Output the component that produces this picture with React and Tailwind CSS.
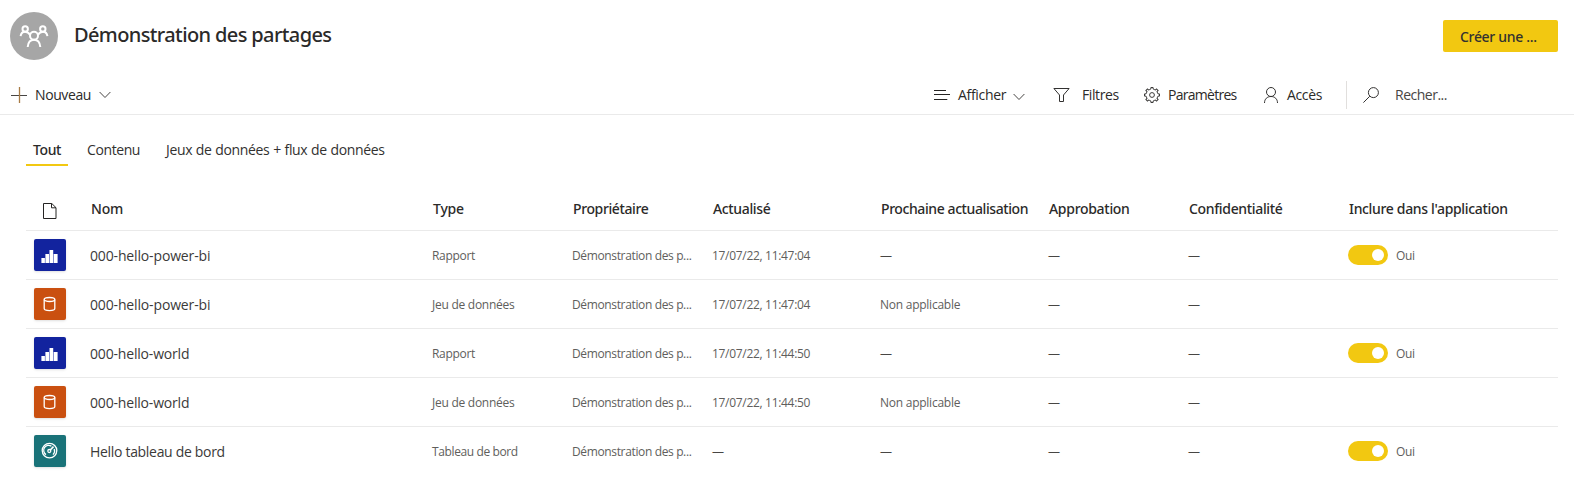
const regular = "font-['Open_Sans','Liberation_Sans',sans-serif] font-normal";
const semibold = "font-['Noto_Sans','Liberation_Sans',sans-serif] font-medium";

const grid =
  'grid grid-cols-[64px_342px_140px_140px_168px_168px_140px_160px_1fr] items-center';

function Plus() {
  return (
    <svg width="16" height="16" viewBox="0 0 16 16" fill="none">
      <path d="M0 8.5h16" stroke="#484644" />
      <path d="M8.500 0v16" stroke="#a87b45" strokeWidth="1.300" />
    </svg>
  );
}

function Chevron({ className = '' }) {
  return (
    <svg className={className} width="12" height="8" viewBox="0 0 12 8" fill="none" stroke="#484644">
      <path d="M.6 1 6 6.5 11.4 1" />
    </svg>
  );
}

function Lines() {
  return (
    <svg width="16" height="16" viewBox="0 0 16 16" fill="none" stroke="#252423">
      <path d="M0 3.5h12M0 7.5h16M0 12.5h13.3" />
    </svg>
  );
}

function Funnel() {
  return (
    <svg width="17" height="16" viewBox="0 0 17 16" fill="none" stroke="#323130">
      <path d="M.9 1.5h15.2L10.5 8v6.5h-4V8z" />
    </svg>
  );
}

function Gear() {
  const teeth = [0, 45, 90, 135, 180, 225, 270, 315];
  return (
    <svg width="16" height="16" viewBox="0 0 16 16" fill="none" stroke="#3b3a39" strokeWidth="1">
      <circle cx="8" cy="8" r="2.4" />
      {teeth.map((angle) => (
        <path
          key={angle}
          transform={`rotate(${angle} 8 8)`}
          d="M5.700 2.450 6.900 2V.5h2.200V2l1.200.450"
        />
      ))}
    </svg>
  );
}

function Person() {
  return (
    <svg width="14" height="16" viewBox="0 0 14 16" fill="none" stroke="#323130">
      <circle cx="7" cy="5" r="4.5" />
      <path d="M.5 16c0-4 2.7-6.5 6.5-6.5s6.5 2.5 6.5 6.5" />
    </svg>
  );
}

function Search() {
  return (
    <svg width="16" height="16" viewBox="0 0 16 16" fill="none" stroke="#323130">
      <circle cx="10.4" cy="5.6" r="5" />
      <path d="M6.8 9.2.4 15.6" />
    </svg>
  );
}

function Page() {
  return (
    <svg width="14" height="16" viewBox="0 0 14 16" fill="none" stroke="#252423">
      <path d="M.5.5h8.3l4.2 4.2v10.8H.5z" />
      <path d="M8.5.5v4.3H13" />
    </svg>
  );
}

function People() {
  return (
    <svg width="30" height="24" viewBox="0 0 30 24" fill="none" stroke="#fff" strokeWidth="2">
      <circle cx="15" cy="11.800" r="4" />
      <path d="M8.700 23c.4-4.500 2.700-7.200 6.300-7.200s5.900 2.700 6.300 7.200" />
      <circle cx="6.200" cy="5" r="2.700" />
      <circle cx="23.800" cy="5" r="2.700" />
      <path d="M1.600 12.200C2 9.200 3.700 7.700 6 7.700c2.300 0 3.900 1.100 5 3.100M28.400 12.200c-.4-3-2.100-4.500-4.400-4.500-2.300 0-3.900 1.100-5 3.100" />
    </svg>
  );
}

const tiles = {
  report: {
    bg: 'bg-[#12239e]',
    icon: (
      <svg width="32" height="32" viewBox="0 0 32 32" fill="#fff">
        <path d="M7.400 19h3.500v5H7.400zM11.400 15h3.600v9h-3.600zM15.500 11h3.700v13h-3.700zM19.700 15h3.900v9h-3.900z" />
      </svg>
    ),
  },
  dataset: {
    bg: 'bg-[#ca5010]',
    icon: (
      <svg width="32" height="32" viewBox="0 0 32 32" fill="none" stroke="#fff" strokeWidth="1.300">
        <ellipse cx="15.500" cy="11.500" rx="5.300" ry="2" />
        <path d="M10.200 11.500v9c0 1.200 2.300 2.100 5.300 2.100s5.300-.9 5.300-2.100v-9" />
      </svg>
    ),
  },
  dashboard: {
    bg: 'bg-[#197278]',
    icon: (
      <svg width="32" height="32" viewBox="0 0 32 32" fill="none" stroke="#fff" strokeWidth="1.300">
        <circle cx="15.500" cy="15.600" r="7.300" />
        <path d="M12 19.600a5 5 0 0 1 5.400-8.500M20.200 14.100a5 5 0 0 1-1.200 5.500" />
        <circle cx="15.300" cy="16" r="1.500" />
        <path d="M16.300 15l3.200-3.400" strokeWidth="1.700" />
      </svg>
    ),
  },
};

const types = {
  report: ['Rapport', 'tracking-[-0.3px]'],
  dataset: ['Jeu de données', 'tracking-[-0.26px]'],
  dashboard: ['Tableau de bord', 'tracking-[-0.38px]'],
};

const rows = [
  { kind: 'report', name: '000-hello-power-bi', spacing: 'tracking-[-0.15px]', updated: '17/07/22, 11:47:04', next: null, included: true },
  { kind: 'dataset', name: '000-hello-power-bi', spacing: 'tracking-[-0.15px]', updated: '17/07/22, 11:47:04', next: 'Non applicable', included: false },
  { kind: 'report', name: '000-hello-world', spacing: 'tracking-[-0.18px]', updated: '17/07/22, 11:44:50', next: null, included: true },
  { kind: 'dataset', name: '000-hello-world', spacing: 'tracking-[-0.18px]', updated: '17/07/22, 11:44:50', next: 'Non applicable', included: false },
  { kind: 'dashboard', name: 'Hello tableau de bord', spacing: 'tracking-[-0.31px]', updated: null, next: null, included: true },
];

const headers = [
  ['Nom', 'tracking-[-0.2px]'],
  ['Type', 'tracking-[-0.2px]'],
  ['Propriétaire', 'tracking-[-0.38px]'],
  ['Actualisé', 'tracking-[-0.36px]'],
  ['Prochaine actualisation', 'tracking-[-0.41px]'],
  ['Approbation', 'tracking-[-0.3px]'],
  ['Confidentialité', 'tracking-[-0.34px]'],
  ["Inclure dans l'application", 'tracking-[-0.33px]'],
];

function Dash() {
  return <span className="text-[#484644]">—</span>;
}

function Row({ row, last }) {
  const [type, typeSpacing] = types[row.kind];
  const tile = tiles[row.kind];
  return (
    <div className={`${grid} h-[49px] border-b text-[12px] leading-4 text-[#605e5c] whitespace-nowrap ${last ? 'border-transparent' : 'border-[#eaeaea]'}`}>
      <div className={`ml-2 size-8 rounded-[2px] shadow-sm ${tile.bg}`}>{tile.icon}</div>
      <div className={`pt-px text-[14px] leading-5 text-[#3b3a39] ${row.spacing}`}>{row.name}</div>
      <div className={`pt-0.5 ${typeSpacing}`}>{type}</div>
      <div className="pt-0.5 tracking-[-0.36px]">Démonstration des p...</div>
      <div className="pt-0.5 tracking-[-0.31px]">{row.updated || <Dash />}</div>
      <div className="pt-0.5 tracking-[-0.25px]">{row.next || <Dash />}</div>
      <div className="pt-0.5"><Dash /></div>
      <div className="pt-0.5"><Dash /></div>
      {row.included ? (
        <div className="flex items-center gap-2">
          <div className="flex h-5 w-10 items-center justify-end rounded-full bg-[#f2c811] pr-1">
            <div className="size-3 rounded-full bg-white" />
          </div>
          <span className="pt-0.5 tracking-[-0.3px]">Oui</span>
        </div>
      ) : (
        <div />
      )}
    </div>
  );
}

export default function App() {
  return (
    <div className={`h-[486px] w-full overflow-hidden bg-white text-[#2b2a29] ${regular}`}>
      <header className="flex h-[76px] items-start justify-between pl-[10px] pr-4 pt-3">
        <div className="flex items-center">
          <div className="flex size-12 items-center justify-center rounded-full bg-[#a6a6a6] pb-px">
            <People />
          </div>
          <h1 className={`-mt-[3px] ml-4 text-[20px] leading-7 tracking-[-0.62px] whitespace-nowrap ${semibold}`}>
            Démonstration des partages
          </h1>
        </div>
        <button className={`mt-2 h-8 w-[115px] rounded-[2px] bg-[#f2c811] pl-[17px] pt-px text-left text-[14px] leading-5 tracking-[-0.32px] text-[#323130] ${semibold}`}>
          Créer une ...
        </button>
      </header>

      <nav className="flex h-[39px] items-center border-b border-[#eaeaea] pl-[11px] text-[14px] leading-5 whitespace-nowrap">
        <Plus />
        <span className="ml-2 w-14 tracking-[-0.4px]">Nouveau</span>
        <Chevron className="ml-2" />
        <div className="flex-1" />
        <div className="flex w-[640px] items-center">
          <Lines />
          <span className="ml-2 w-[49px] tracking-[-0.3px]">Afficher</span>
          <Chevron className="ml-[6px] mt-[3px]" />
          <div className="ml-[28px]"><Funnel /></div>
          <span className="ml-3 w-[37px] tracking-[-0.4px]">Filtres</span>
          <div className="ml-[25px]"><Gear /></div>
          <span className="ml-2 w-[70px] tracking-[-0.73px]">Paramètres</span>
          <div className="ml-[26px]"><Person /></div>
          <span className="ml-[9px] w-[36px] tracking-[-0.35px]">Accès</span>
          <div className="ml-[23px] h-7 w-px bg-[#e1dfdd]" />
          <div className="ml-4"><Search /></div>
          <span className="ml-4 tracking-[-0.5px] text-[#484644]">Recher...</span>
        </div>
      </nav>

      <div className="flex h-[51px] items-end pl-[26px] text-[14px] leading-5 whitespace-nowrap">
        <div className={`h-[26px] w-[42px] border-b-2 border-[#f2c811] pl-[7px] tracking-[-0.4px] ${semibold}`}>Tout</div>
        <div className="ml-[19px] h-[26px] w-[79px] tracking-[-0.4px] text-[#323130]">Contenu</div>
        <div className="h-[26px] tracking-[-0.36px] [word-spacing:0.5px] text-[#323130]">Jeux de données + flux de données</div>
      </div>

      <main className="ml-[26px] mr-4 mt-[15px]">
        <div className={`${grid} h-[50px] border-b border-[#eaeaea] text-[14px] leading-5 whitespace-nowrap ${semibold}`}>
          <div className="pl-[17px] pt-[11px]"><Page /></div>
          {headers.map(([label, spacing]) => (
            <div key={label} className={`pl-px pt-[7px] ${spacing}`}>{label}</div>
          ))}
        </div>
        {rows.map((row, i) => (
          <Row key={i} row={row} last={i === rows.length - 1} />
        ))}
      </main>
    </div>
  );
}
